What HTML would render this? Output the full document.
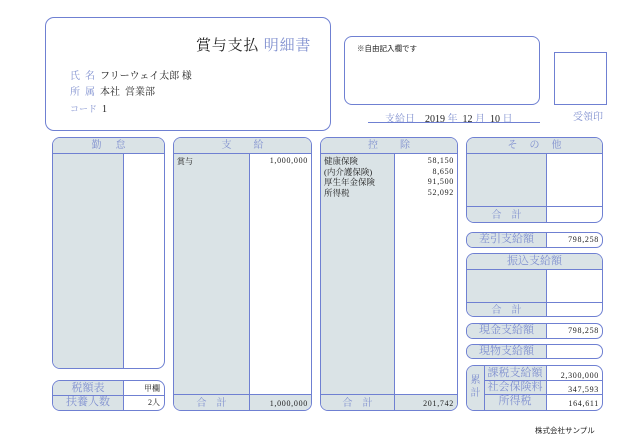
<!DOCTYPE html>
<html><head><meta charset="utf-8"><style>
*{margin:0;padding:0;box-sizing:border-box}
body{width:630px;height:440px;background:#fff;position:relative;overflow:hidden;font-family:"Liberation Serif","Noto Serif CJK SC","Noto Sans CJK JP",serif;color:#222}
.a{position:absolute}
.bx{position:absolute;border:1.6px solid #6f80d2;border-radius:8px;overflow:hidden;background:#fff}
.g{background:#dae3e6}
.lb{color:#7f8fcf}
.vl{position:absolute;top:0;bottom:0;border-left:1.3px solid #6f80d2}
.hl{position:absolute;left:0;right:0;border-top:1.3px solid #6f80d2}
.s{font-size:8px}
.n{font-size:8px;letter-spacing:0.7px}
.c{text-align:center}
.r{text-align:right}
</style></head><body>

<div class="bx" style="left:45px;top:17px;width:286px;height:114px;border-radius:9px">
  <div class="a" style="left:150px;top:16px;font-size:15px;letter-spacing:0.8px">賞与支払 <span class="lb">明細書</span></div>
  <div class="a" style="left:24px;top:51px;font-size:10px;line-height:16px">
    <div><span class="lb">氏&nbsp;&nbsp;名</span>&nbsp;&nbsp;フリーウェイ太郎 様</div>
    <div><span class="lb">所&nbsp;&nbsp;属</span>&nbsp;&nbsp;本社&nbsp;&nbsp;営業部</div>
    <div><span class="lb" style="font-size:9px">コード</span>&nbsp;&nbsp;1</div>
  </div>
</div>

<div class="bx" style="left:344px;top:36px;width:196px;height:69px">
  <div class="a s" style="left:12px;top:6px;font-family:'Noto Sans CJK JP',sans-serif;font-size:7.5px">※自由記入欄です</div>
</div>
<div class="a" style="left:554px;top:52px;width:53px;height:53px;border:1.3px solid #6f80d2"></div>
<div class="a lb" style="left:573px;top:108px;font-size:10px">受領印</div>
<div class="a" style="left:385px;top:110px;font-size:10px;white-space:pre"><span class="lb">支給日</span>    2019 <span class="lb">年</span>  12 <span class="lb">月</span>  10 <span class="lb">日</span></div>
<div class="a" style="left:368px;top:122px;width:172px;border-top:1.3px solid #6f80d2"></div>

<!-- 勤怠 -->
<div class="bx" style="left:52px;top:137px;width:113px;height:232px">
  <div class="a g lb c" style="left:0;right:0;top:0;height:15px;font-size:10px;line-height:15px;letter-spacing:14px;padding-left:14px">勤怠</div>
  <div class="hl" style="top:15px"></div>
  <div class="a g" style="left:0;top:16px;width:70px;bottom:0"></div>
  <div class="vl" style="left:70px;top:16px"></div>
</div>
<div class="bx" style="left:52px;top:380px;width:113px;height:31px">
  <div class="a g lb c" style="left:0;top:0;width:70px;bottom:0;font-size:11px;line-height:14px">税額表<br>扶養人数</div>
  <div class="vl" style="left:70px"></div>
  <div class="hl" style="top:13.5px"></div>
  <div class="a r s" style="right:4px;top:2px">甲欄</div>
  <div class="a r s" style="right:4px;top:16px">2人</div>
</div>

<!-- 支給 -->
<div class="bx" style="left:173px;top:137px;width:139px;height:274px">
  <div class="a g lb c" style="left:0;right:0;top:0;height:15px;font-size:10px;line-height:15px;letter-spacing:22px;padding-left:22px">支給</div>
  <div class="hl" style="top:15px"></div>
  <div class="a g" style="left:0;top:16px;width:75px;bottom:0"></div>
  <div class="vl" style="left:75px;top:16px"></div>
  <div class="a s" style="left:3px;top:18px">賞与</div>
  <div class="a n r" style="right:3px;top:18px">1,000,000</div>
  <div class="a g" style="left:0;right:0;bottom:0;height:15px"></div>
  <div class="hl" style="bottom:15px"></div>
  <div class="vl" style="left:75px;top:auto;height:15px"></div>
  <div class="a lb c" style="left:0;width:75px;bottom:1px;font-size:10px;letter-spacing:10px;padding-left:10px">合計</div>
  <div class="a n r" style="right:3px;bottom:2px">1,000,000</div>
</div>

<!-- 控除 -->
<div class="bx" style="left:320px;top:137px;width:138px;height:274px">
  <div class="a g lb c" style="left:0;right:0;top:0;height:15px;font-size:10px;line-height:15px;letter-spacing:22px;padding-left:22px">控除</div>
  <div class="hl" style="top:15px"></div>
  <div class="a g" style="left:0;top:16px;width:73px;bottom:0"></div>
  <div class="vl" style="left:73px;top:16px"></div>
  <div class="a s" style="left:3px;top:18px;line-height:10.7px;font-size:8.5px">健康保険<br>(内介護保険)<br>厚生年金保険<br>所得税</div>
  <div class="a n r" style="right:3px;top:18px;line-height:10.7px">58,150<br>8,650<br>91,500<br>52,092</div>
  <div class="a g" style="left:0;right:0;bottom:0;height:15px"></div>
  <div class="hl" style="bottom:15px"></div>
  <div class="vl" style="left:73px;top:auto;height:15px"></div>
  <div class="a lb c" style="left:0;width:73px;bottom:1px;font-size:10px;letter-spacing:10px;padding-left:10px">合計</div>
  <div class="a n r" style="right:3px;bottom:2px">201,742</div>
</div>

<!-- その他 -->
<div class="bx" style="left:466px;top:137px;width:137px;height:86px">
  <div class="a g lb c" style="left:0;right:0;top:0;height:15px;font-size:10px;line-height:15px;letter-spacing:12px;padding-left:12px">その他</div>
  <div class="hl" style="top:15px"></div>
  <div class="a g" style="left:0;top:16px;width:79px;bottom:0"></div>
  <div class="vl" style="left:79px;top:16px"></div>
  <div class="hl" style="bottom:15px"></div>
  <div class="a lb c" style="left:0;width:79px;bottom:1px;font-size:10px;letter-spacing:10px;padding-left:10px">合計</div>
</div>

<div class="bx" style="left:466px;top:232px;width:137px;height:16px;border-radius:7px">
  <div class="a g lb c" style="left:0;top:0;bottom:0;width:79px;font-size:11px;line-height:13px">差引支給額</div>
  <div class="vl" style="left:79px"></div>
  <div class="a n r" style="right:3px;top:2px">798,258</div>
</div>

<div class="bx" style="left:466px;top:253px;width:137px;height:64px">
  <div class="a g lb c" style="left:0;right:0;top:0;height:15px;font-size:11px;line-height:15px">振込支給額</div>
  <div class="hl" style="top:15px"></div>
  <div class="a g" style="left:0;top:16px;width:79px;bottom:0"></div>
  <div class="vl" style="left:79px;top:16px"></div>
  <div class="hl" style="bottom:13px"></div>
  <div class="a lb c" style="left:0;width:79px;bottom:0px;font-size:10px;letter-spacing:10px;padding-left:10px">合計</div>
</div>

<div class="bx" style="left:466px;top:323px;width:137px;height:16px;border-radius:7px">
  <div class="a g lb c" style="left:0;top:0;bottom:0;width:79px;font-size:11px;line-height:13px">現金支給額</div>
  <div class="vl" style="left:79px"></div>
  <div class="a n r" style="right:3px;top:2px">798,258</div>
</div>
<div class="bx" style="left:466px;top:344px;width:137px;height:15px;border-radius:7px">
  <div class="a g lb c" style="left:0;top:0;bottom:0;width:79px;font-size:11px;line-height:12px">現物支給額</div>
  <div class="vl" style="left:79px"></div>
</div>

<div class="bx" style="left:466px;top:365px;width:137px;height:46px">
  <div class="a g" style="left:0;top:0;bottom:0;width:79px"></div>
  <div class="a lb c" style="left:0;top:8px;width:17px;font-size:10px;line-height:13px">累<br>計</div>
  <div class="vl" style="left:17px"></div>
  <div class="vl" style="left:79px"></div>
  <div class="a" style="left:17px;right:0;top:14px;border-top:1.3px solid #6f80d2"></div>
  <div class="a" style="left:17px;right:0;top:28px;border-top:1.3px solid #6f80d2"></div>
  <div class="a lb c" style="left:17px;width:62px;top:0;font-size:11px;line-height:14px">課税支給額<br>社会保険料<br>所得税</div>
  <div class="a n r" style="right:3px;top:3px;line-height:14px">2,300,000<br>347,593<br>164,611</div>
</div>

<div class="a s" style="left:535px;top:425px;font-family:'Noto Sans CJK JP',sans-serif;font-size:7.5px">株式会社サンプル</div>
</body></html>
